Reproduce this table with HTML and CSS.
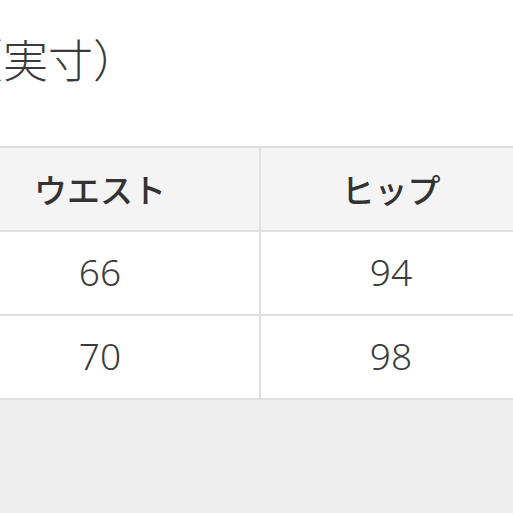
FILE: index.html
```html
<!DOCTYPE html>
<html lang="ja">
<head>
<meta charset="utf-8">
<link rel="stylesheet" href="styles.css">
</head>
<body>
<div class="page">
  <h2 class="title">（実寸）</h2>
  <table class="size-table">
    <thead>
      <tr><th class="c1">ウエスト</th><th class="c2">ヒップ</th><th class="c3"></th></tr>
    </thead>
    <tbody>
      <tr><td>66</td><td>94</td><td></td></tr>
      <tr><td>70</td><td>98</td><td></td></tr>
    </tbody>
  </table>
  <div class="footer"></div>
</div>
</body>
</html>
```

FILE: styles.css
```css
html, body {
  margin: 0;
  padding: 0;
  background: #ffffff;
  overflow: hidden;
}
.page {
  width: 513px;
  height: 513px;
  display: flex;
  flex-direction: column;
  font-family: "Noto Sans CJK JP", "Noto Sans", sans-serif;
  color: #333333;
}
.title {
  margin: 0 0 0 -42px;
  height: 146px;
  box-sizing: border-box;
  padding-top: 36px;
  font-size: 45px;
  line-height: 45px;
  font-weight: 300;
  color: #3a3a3a;
  white-space: nowrap;
}
.size-table {
  margin-left: -61px;
  border-collapse: collapse;
  table-layout: fixed;
  width: 720px;
  flex: none;
}
.size-table th, .size-table td {
  border: 2px solid #e0e0e0;
  padding: 0;
  text-align: center;
  vertical-align: middle;
}
.size-table th {
  height: 82px;
  background: #f4f4f4;
  font-size: 33px;
  font-weight: 500;
  color: #333333;
}
.size-table td {
  height: 78px;
  padding-bottom: 4px;
  background: #ffffff;
  font-family: "Noto Sans", "Liberation Sans", sans-serif;
  font-size: 37px;
  font-weight: 300;
  color: #3c3c3c;
}
.c1 { width: 318px; }
.c2 { width: 260px; }
.c3 { width: 140px; }
.footer {
  flex: 1;
  background: #eeeeee;
}
```
